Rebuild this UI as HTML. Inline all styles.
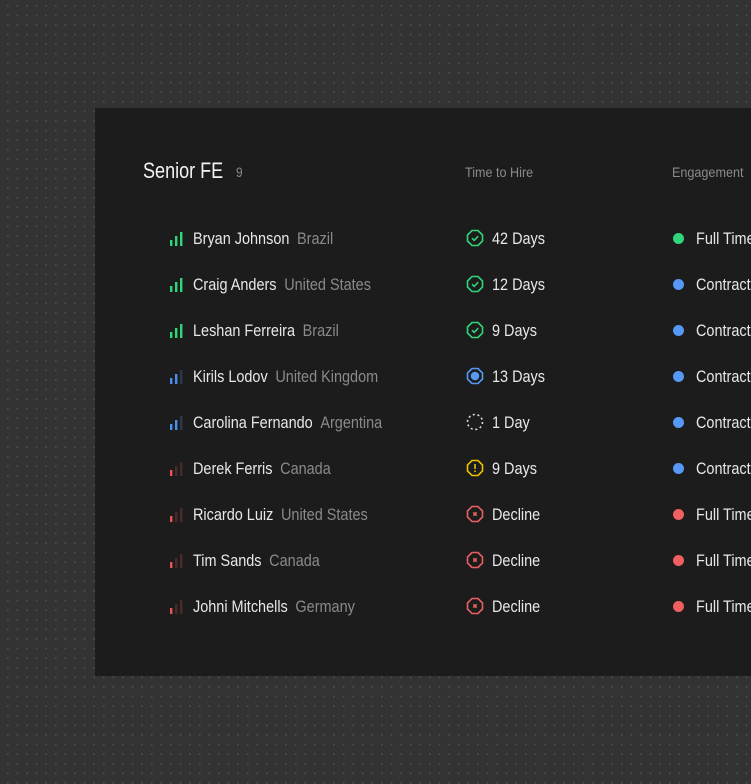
<!DOCTYPE html>
<html><head><style>
*{margin:0;padding:0;box-sizing:border-box}
html,body{width:751px;height:784px;overflow:hidden}
body{background-color:#333;background-image:radial-gradient(circle,#4a4a4a 0.9px,transparent 1.2px);background-size:9.6px 9.6px;background-position:3px 1px;font-family:"Liberation Sans",sans-serif;position:relative}
.panel{position:absolute;left:95px;top:108px;width:700px;height:568px;background:#1c1c1c}
.t{position:absolute;white-space:nowrap;transform:scaleX(0.85);transform-origin:0 0}
.title{left:143px;top:158px;color:#f2f2f2;font-size:22px;transform:scaleX(0.82)}
.cnt{left:236px;top:164px;color:#8a8a8a;font-size:14px}
.hdr{color:#8a8a8a;font-size:14px;top:164px;transform:scaleX(0.9)}
.row{position:absolute;left:0;height:20px;width:751px}
.name{left:193px;color:#e8e8e8;font-size:17px;top:1px}
.name span{color:#8a8a8a;margin-left:9px}
.sig{position:absolute;left:170px;top:4px}
.ic{position:absolute;left:466px;top:1px}
.days{left:492px;color:#e8e8e8;font-size:17px;top:1px}
.dot{position:absolute;left:673px;top:5px;width:11px;height:11px;border-radius:50%}
.eng{left:696px;color:#e8e8e8;font-size:17px;top:1px}
</style></head><body>
<div class="panel"></div>
<div class="t title">Senior FE</div>
<div class="t cnt">9</div>
<div class="t hdr" style="left:465px">Time to Hire</div>
<div class="t hdr" style="left:672px">Engagement</div>

<svg width="0" height="0" style="position:absolute">
<defs>
<path id="oct" d="M6 1.5h6l4.5 4.5v6l-4.5 4.5h-6l-4.5-4.5v-6z" fill="none" stroke-width="1.6"/>
</defs>
</svg>

<div class="row" style="top:228px">
<svg class="sig" width="13" height="14"><rect x="0" y="8" width="2.4" height="6" fill="#2fd67a"/><rect x="5" y="4" width="2.4" height="10" fill="#2fd67a"/><rect x="10" y="0" width="2.4" height="14" fill="#2fd67a"/></svg>
<div class="t name">Bryan Johnson<span>Brazil</span></div>
<svg class="ic" width="18" height="18"><use href="#oct" stroke="#2fd67a"/><path d="M6 9.2l2.2 2.2 4-4.2" fill="none" stroke="#2fd67a" stroke-width="1.6"/></svg>
<div class="t days">42 Days</div>
<div class="dot" style="background:#2fd67a"></div><div class="t eng">Full Time</div>
</div>

<div class="row" style="top:274px">
<svg class="sig" width="13" height="14"><rect x="0" y="8" width="2.4" height="6" fill="#2fd67a"/><rect x="5" y="4" width="2.4" height="10" fill="#2fd67a"/><rect x="10" y="0" width="2.4" height="14" fill="#2fd67a"/></svg>
<div class="t name">Craig Anders<span>United States</span></div>
<svg class="ic" width="18" height="18"><use href="#oct" stroke="#2fd67a"/><path d="M6 9.2l2.2 2.2 4-4.2" fill="none" stroke="#2fd67a" stroke-width="1.6"/></svg>
<div class="t days">12 Days</div>
<div class="dot" style="background:#5599f5"></div><div class="t eng">Contract</div>
</div>

<div class="row" style="top:320px">
<svg class="sig" width="13" height="14"><rect x="0" y="8" width="2.4" height="6" fill="#2fd67a"/><rect x="5" y="4" width="2.4" height="10" fill="#2fd67a"/><rect x="10" y="0" width="2.4" height="14" fill="#2fd67a"/></svg>
<div class="t name">Leshan Ferreira<span>Brazil</span></div>
<svg class="ic" width="18" height="18"><use href="#oct" stroke="#2fd67a"/><path d="M6 9.2l2.2 2.2 4-4.2" fill="none" stroke="#2fd67a" stroke-width="1.6"/></svg>
<div class="t days">9 Days</div>
<div class="dot" style="background:#5599f5"></div><div class="t eng">Contract</div>
</div>

<div class="row" style="top:366px">
<svg class="sig" width="13" height="14"><rect x="0" y="8" width="2.4" height="6" fill="#4a8ff0"/><rect x="5" y="4" width="2.4" height="10" fill="#4a8ff0"/><rect x="10" y="0" width="2.4" height="14" fill="#2a3a4a"/></svg>
<div class="t name">Kirils Lodov<span>United Kingdom</span></div>
<svg class="ic" width="18" height="18"><use href="#oct" stroke="#5599f5"/><circle cx="9" cy="9" r="4.3" fill="#5599f5"/></svg>
<div class="t days">13 Days</div>
<div class="dot" style="background:#5599f5"></div><div class="t eng">Contract</div>
</div>

<div class="row" style="top:412px">
<svg class="sig" width="13" height="14"><rect x="0" y="8" width="2.4" height="6" fill="#4a8ff0"/><rect x="5" y="4" width="2.4" height="10" fill="#4a8ff0"/><rect x="10" y="0" width="2.4" height="14" fill="#2a3a4a"/></svg>
<div class="t name">Carolina Fernando<span>Argentina</span></div>
<svg class="ic" width="18" height="18"><circle cx="9" cy="9" r="7.5" fill="none" stroke="#ddd" stroke-width="1.6" stroke-dasharray="2 2.7"/></svg>
<div class="t days">1 Day</div>
<div class="dot" style="background:#5599f5"></div><div class="t eng">Contract</div>
</div>

<div class="row" style="top:458px">
<svg class="sig" width="13" height="14"><rect x="0" y="8" width="2.4" height="6" fill="#e85555"/><rect x="5" y="4" width="2.4" height="10" fill="#4a2a2a"/><rect x="10" y="0" width="2.4" height="14" fill="#4a2a2a"/></svg>
<div class="t name">Derek Ferris<span>Canada</span></div>
<svg class="ic" width="18" height="18"><use href="#oct" stroke="#e8c000"/><rect x="8.2" y="5" width="1.6" height="5" fill="#e8c000"/><rect x="8.2" y="11.5" width="1.6" height="1.6" fill="#e8c000"/></svg>
<div class="t days">9 Days</div>
<div class="dot" style="background:#5599f5"></div><div class="t eng">Contract</div>
</div>

<div class="row" style="top:504px">
<svg class="sig" width="13" height="14"><rect x="0" y="8" width="2.4" height="6" fill="#e85555"/><rect x="5" y="4" width="2.4" height="10" fill="#4a2a2a"/><rect x="10" y="0" width="2.4" height="14" fill="#4a2a2a"/></svg>
<div class="t name">Ricardo Luiz<span>United States</span></div>
<svg class="ic" width="18" height="18"><use href="#oct" stroke="#e86060"/><path d="M7.3 7.3l3.4 3.4M10.7 7.3l-3.4 3.4" stroke="#e86060" stroke-width="1.6"/></svg>
<div class="t days">Decline</div>
<div class="dot" style="background:#f06060"></div><div class="t eng">Full Time</div>
</div>

<div class="row" style="top:550px">
<svg class="sig" width="13" height="14"><rect x="0" y="8" width="2.4" height="6" fill="#e85555"/><rect x="5" y="4" width="2.4" height="10" fill="#4a2a2a"/><rect x="10" y="0" width="2.4" height="14" fill="#4a2a2a"/></svg>
<div class="t name">Tim Sands<span>Canada</span></div>
<svg class="ic" width="18" height="18"><use href="#oct" stroke="#e86060"/><path d="M7.3 7.3l3.4 3.4M10.7 7.3l-3.4 3.4" stroke="#e86060" stroke-width="1.6"/></svg>
<div class="t days">Decline</div>
<div class="dot" style="background:#f06060"></div><div class="t eng">Full Time</div>
</div>

<div class="row" style="top:596px">
<svg class="sig" width="13" height="14"><rect x="0" y="8" width="2.4" height="6" fill="#e85555"/><rect x="5" y="4" width="2.4" height="10" fill="#4a2a2a"/><rect x="10" y="0" width="2.4" height="14" fill="#4a2a2a"/></svg>
<div class="t name">Johni Mitchells<span>Germany</span></div>
<svg class="ic" width="18" height="18"><use href="#oct" stroke="#e86060"/><path d="M7.3 7.3l3.4 3.4M10.7 7.3l-3.4 3.4" stroke="#e86060" stroke-width="1.6"/></svg>
<div class="t days">Decline</div>
<div class="dot" style="background:#f06060"></div><div class="t eng">Full Time</div>
</div>
</body></html>
